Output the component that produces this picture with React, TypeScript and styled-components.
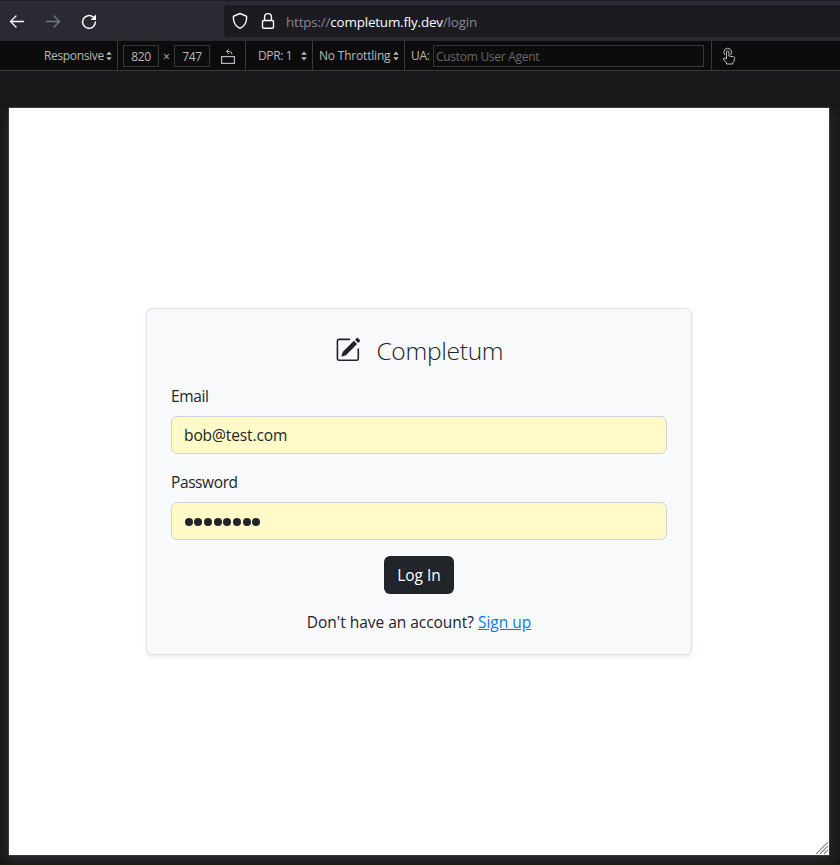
import React from "react";
import styled, { createGlobalStyle } from "styled-components";
import { BsPencilSquare } from "react-icons/bs";

const GlobalStyle = createGlobalStyle`
  *, *::before, *::after { box-sizing: border-box; }
  html, body { margin: 0; padding: 0; background: #18181a; }
  body { font-family: "Open Sans", "Noto Sans", sans-serif; overflow: hidden; }
`;

const Browser = styled.div`
  display: flex;
  flex-direction: column;
  width: 840px;
  height: 865px;
  overflow: hidden;
  background: #18181a;
`;

const NavBar = styled.header`
  display: flex;
  flex: none;
  height: 41px;
  padding: 4px 0 4px 8px;
  background: #2b2a33;
  border-top: 1px solid #1c1b22;
`;

const NavButtons = styled.div`
  display: flex;
  gap: 18px;
  width: 216px;
  align-items: center;
`;

const NavButton = styled.button<{ $muted?: boolean }>`
  display: flex;
  padding: 0;
  border: 0;
  background: none;
  color: ${(p) => (p.$muted ? "#72787b" : "#fbfbfe")};
`;

const AddressBar = styled.div`
  display: flex;
  flex: 1;
  align-items: center;
  padding-left: 8px;
  background: #1c1b22;
  border-radius: 4px 0 0 4px;
  color: #fbfbfe;
`;

const Url = styled.div`
  margin: 2px 0 0 10px;
  font-size: 13.4px;
  line-height: 20px;
  letter-spacing: -0.17px;
  white-space: pre;
  color: #85878c;
`;

const Host = styled.span`
  color: #fbfbfe;
`;

const AddressIcon = styled.svg`
  flex: none;
  & + & { margin-left: 12px; }
`;

const DeviceBar = styled.div`
  display: flex;
  flex: none;
  align-items: stretch;
  height: 30px;
  background: #0c0c0d;
  border-bottom: 1px solid #38383d;
  color: #b8b8bc;
  font-size: 12px;
  line-height: 16px;
  white-space: nowrap;
`;

const Tool = styled.div<{ $width: number; $left?: number; $divided?: boolean }>`
  display: flex;
  flex: none;
  align-items: center;
  width: ${(p) => p.$width}px;
  padding-left: ${(p) => p.$left ?? 0}px;
  border-right: ${(p) => (p.$divided ? "1px solid #38383d" : "0")};
`;

const ToolText = styled.span<{ $width: number; $spacing?: number }>`
  flex: none;
  width: ${(p) => p.$width}px;
  padding-top: 1px;
  letter-spacing: ${(p) => p.$spacing ?? 0}px;
`;

const SizeBox = styled.div`
  flex: none;
  width: 36px;
  height: 22px;
  border: 1px solid #38383d;
  line-height: 21px;
  text-align: center;
  letter-spacing: -0.35px;
`;

const Times = styled.span`
  flex: none;
  width: 15px;
  padding-top: 2px;
  text-align: center;
  font-size: 12px;
`;

const AgentField = styled.div`
  width: 271px;
  height: 22px;
  padding-left: 2px;
  border: 1px solid #38383d;
  line-height: 21px;
  letter-spacing: -0.28px;
  color: #68686c;
`;

const Stage = styled.main`
  display: flex;
  flex: 1;
  padding: 36px 0 0 8px;
`;

const Viewport = styled.section`
  display: flex;
  position: relative;
  flex: none;
  justify-content: center;
  align-items: flex-start;
  width: 822px;
  height: 749px;
  padding-top: 200px;
  background: #fff;
  border: 1px solid #38383d;
  box-shadow: 0 4px 12px rgba(75, 75, 80, 0.4);
`;

const Grip = styled.svg`
  position: absolute;
  right: 1px;
  bottom: 1px;
`;

const Card = styled.form`
  display: flex;
  flex-direction: column;
  width: 546px;
  height: 347px;
  padding: 24px;
  background: #f8f9fb;
  border: 1px solid #dee2e6;
  border-radius: 6px;
  box-shadow: 0 2px 4px rgba(0, 0, 0, 0.075);
  color: #212529;
  font-size: 15.5px;
  line-height: 24px;
`;

const Brand = styled.h1`
  display: flex;
  align-items: center;
  justify-content: center;
  gap: 16px;
  height: 35px;
  margin: 0 0 16px;
  font-size: 24.6px;
  font-weight: 300;
  line-height: 35px;
  letter-spacing: -0.3px;
  & svg { margin-bottom: 2px; }
`;

const Label = styled.label<{ $spacing: number }>`
  margin-bottom: 8px;
  letter-spacing: ${(p) => p.$spacing}px;
`;

const Field = styled.div`
  display: flex;
  align-items: center;
  flex: none;
  height: 38px;
  margin-bottom: 16px;
  padding: 0 12px;
  background: #fffac8;
  border: 1px solid #ced4da;
  border-radius: 6px;
  letter-spacing: -0.1px;
`;

const Dots = styled.div`
  display: flex;
  gap: 1.7px;
  padding: 2px 0 0 0.5px;
`;

const Dot = styled.i`
  width: 8px;
  height: 8px;
  border-radius: 50%;
  background: #212529;
`;

const Submit = styled.button`
  align-self: center;
  flex: none;
  width: 70px;
  height: 38px;
  margin-bottom: 16px;
  padding: 0;
  border: 0;
  border-radius: 6px;
  background: #212529;
  color: #fff;
  font: inherit;
`;

const Footer = styled.p<{ $spacing: number }>`
  margin: 0;
  text-align: center;
  white-space: nowrap;
  letter-spacing: ${(p) => p.$spacing}px;
`;

const Link = styled.a`
  color: #0d7bef;
  text-decoration: underline;
`;

const Arrow = ({ flip }: { flip?: boolean }) => (
  <svg width="18" height="18" viewBox="0 0 18 18" fill="none" stroke="currentColor" strokeWidth="1.4" strokeLinecap="round" strokeLinejoin="round">
    <path d={flip ? "M2.5 9.5h13M10 4 15.5 9.500 10 15" : "M15.5 9.5h-13M8 4 2.5 9.500 8 15"} />
  </svg>
);

const Sorter = () => (
  <svg width="6" height="10" viewBox="0 0 6 10" fill="#b8b8bc">
    <path d="M3 0.500 5.800 3.800H.2zM3 9.500.2 6.200h5.600z" />
  </svg>
);

export default function App() {
  return (
    <>
      <GlobalStyle />
      <Browser>
        <NavBar>
          <NavButtons>
            <NavButton aria-label="Back"><Arrow /></NavButton>
            <NavButton aria-label="Forward" $muted><Arrow flip /></NavButton>
            <NavButton aria-label="Reload">
              <svg width="18" height="18" viewBox="0 0 18 18" fill="none" stroke="currentColor" strokeWidth="1.5">
                <path d="M13.2 5.1A6.4 6.4 0 1 0 15.4 10" strokeLinecap="round" />
                <path d="M16 2.500v5.500h-5.500z" fill="currentColor" stroke="none" />
              </svg>
            </NavButton>
          </NavButtons>
          <AddressBar>
            <AddressIcon width="16" height="18" viewBox="0 0 16 18" fill="none" stroke="currentColor" strokeWidth="1.4" strokeLinejoin="round">
              <path d="M8 1.5 14 4c.5.2.7.5.7 1 0 5.300-2 9.200-6.700 11.300C3.300 14.200 1.300 10.300 1.300 5c0-.5.200-.8.700-1z" />
            </AddressIcon>
            <AddressIcon width="16" height="18" viewBox="0 0 16 18" fill="none" stroke="currentColor" strokeWidth="1.4">
              <rect x="2.500" y="8.500" width="11" height="7.800" rx="1.300" />
              <path d="M4.600 8.500V5a3.400 3.400 0 0 1 6.800 0v3.500" />
            </AddressIcon>
            <Url>https://<Host>completum.fly.dev</Host>/login</Url>
          </AddressBar>
        </NavBar>

        <DeviceBar>
          <Tool $width={118} $left={44} $divided>
            <ToolText $width={62} $spacing={-0.35}>Responsive</ToolText>
            <Sorter />
          </Tool>
          <Tool $width={128} $left={5} $divided>
            <SizeBox>820</SizeBox>
            <Times>×</Times>
            <SizeBox>747</SizeBox>
            <svg width="35" height="22" viewBox="0 0 35 22" fill="none" stroke="#b8b8bc">
              <rect x="11.600" y="11.600" width="12.800" height="6.800" strokeWidth="1.200" />
              <path d="M17 6.500h2.500q2.500 0 2.500 3M18.800 4.200l-2.300 2.300 2.300 2.300" />
            </svg>
          </Tool>
          <Tool $width={67} $left={12} $divided>
            <ToolText $width={43} $spacing={-0.35}>DPR: 1</ToolText>
            <Sorter />
          </Tool>
          <Tool $width={92} $left={6} $divided>
            <ToolText $width={74} $spacing={-0.2}>No Throttling</ToolText>
            <Sorter />
          </Tool>
          <Tool $width={307} $left={6} $divided>
            <ToolText $width={22} $spacing={-0.3}>UA:</ToolText>
            <AgentField>Custom User Agent</AgentField>
          </Tool>
          <Tool $width={40} $left={10}>
            <svg width="14" height="18" viewBox="0 0 14 18" fill="none" stroke="#b8b8bc" strokeLinejoin="round" strokeLinecap="round">
              <path d="M4.500 11.500V5a1.200 1.200 0 0 1 2.400 0v4l4.800.8q1.100.3 1 1.500l-.7 3-1.200 1.500v1.200H4.500v-1L1.400 12q0-1.400 1.300-1.100z" />
              <path d="M2.500 7.700a4 4 0 1 1 6.500 0" />
            </svg>
          </Tool>
        </DeviceBar>

        <Stage>
          <Viewport>
            <Card>
              <Brand>
                <BsPencilSquare size={25.7} />
                <span>Completum</span>
              </Brand>
              <Label $spacing={-0.35}>Email</Label>
              <Field>bob@test.com</Field>
              <Label $spacing={-0.4}>Password</Label>
              <Field>
                <Dots aria-label="Password">
                  {Array.from({ length: 8 }, (_, i) => <Dot key={i} />)}
                </Dots>
              </Field>
              <Submit type="button">Log In</Submit>
              <Footer $spacing={-0.03}>Don't have an account? <Link>Sign up</Link></Footer>
            </Card>
            <Grip width="12" height="12" viewBox="0 0 12 12" stroke="#7d8388" strokeWidth="1.1">
              <path d="M0 12 12 0M4 12l8-8M8 12l4-4" />
            </Grip>
          </Viewport>
        </Stage>
      </Browser>
    </>
  );
}
